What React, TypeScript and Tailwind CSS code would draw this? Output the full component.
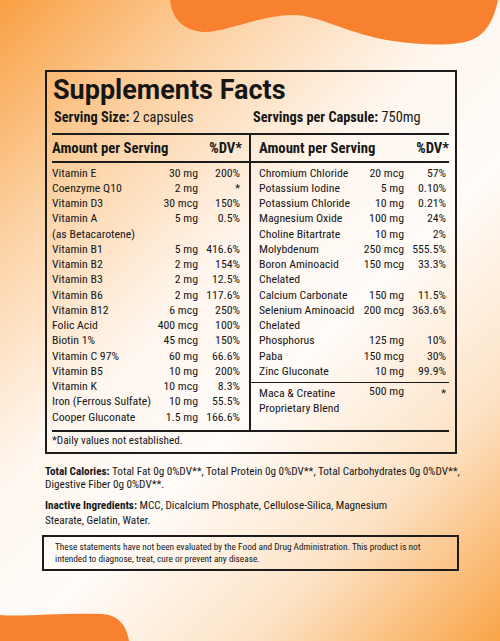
const left: [string, string, string][] = [
  ["Vitamin E", "30 mg", "200%"],
  ["Coenzyme Q10", "2 mg", "*"],
  ["Vitamin D3", "30 mcg", "150%"],
  ["Vitamin A", "5 mg", "0.5%"],
  ["(as Betacarotene)", "", ""],
  ["Vitamin B1", "5 mg", "416.6%"],
  ["Vitamin B2", "2 mg", "154%"],
  ["Vitamin B3", "2 mg", "12.5%"],
  ["Vitamin B6", "2 mg", "117.6%"],
  ["Vitamin B12", "6 mcg", "250%"],
  ["Folic Acid", "400 mcg", "100%"],
  ["Biotin 1%", "45 mcg", "150%"],
  ["Vitamin C 97%", "60 mg", "66.6%"],
  ["Vitamin B5", "10 mg", "200%"],
  ["Vitamin K", "10 mcg", "8.3%"],
  ["Iron (Ferrous Sulfate)", "10 mg", "55.5%"],
  ["Cooper Gluconate", "1.5 mg", "166.6%"],
];

const right: [string, string, string][] = [
  ["Chromium Chloride", "20 mcg", "57%"],
  ["Potassium Iodine", "5 mg", "0.10%"],
  ["Potassium Chloride", "10 mg", "0.21%"],
  ["Magnesium Oxide", "100 mg", "24%"],
  ["Choline Bitartrate", "10 mg", "2%"],
  ["Molybdenum", "250 mcg", "555.5%"],
  ["Boron Aminoacid", "150 mcg", "33.3%"],
  ["Chelated", "", ""],
  ["Calcium Carbonate", "150 mg", "11.5%"],
  ["Selenium Aminoacid", "200 mcg", "363.6%"],
  ["Chelated", "", ""],
  ["Phosphorus", "125 mg", "10%"],
  ["Paba", "150 mcg", "30%"],
  ["Zinc Gluconate", "10 mg", "99.9%"],
];

const Row = ({ name, amount, dv }: { name: string; amount: string; dv: string }) => (
  <div className="flex h-[15.25px] items-center text-[11.8px] leading-[15.25px]">
    <span className="flex-1 whitespace-nowrap">{name}</span>
    <span className="shrink-0 whitespace-nowrap text-right">{amount}</span>
    <span className="w-[42px] shrink-0 text-right">{dv}</span>
  </div>
);

const Header = () => (
  <div className="flex h-[26px] items-center justify-between text-[14.7px] font-bold">
    <span>Amount per Serving</span>
    <span>%DV*</span>
  </div>
);

export default function App() {
  return (
    <div className="relative h-[641px] w-[500px] overflow-hidden bg-[linear-gradient(135deg,#f9a043_0%,#fcd3a6_22%,#fff6ee_42%,#fffcf9_58%,#fde3c6_78%,#f9a447_100%)] font-['Roboto_Condensed',Roboto,sans-serif] font-stretch-condensed text-[#161616]">
      <svg className="absolute left-0 top-0" width="500" height="60" viewBox="0 0 500 60">
        <path
          d="M170,0 C172,18 182,30 203,32 C225,33 260,15 293,15 C320,15 350,35 393,41 C420,45 445,46 465,42 C485,38 494,20 498,0 Z"
          fill="#f7812e"
        />
      </svg>
      <svg className="absolute bottom-0 left-0" width="140" height="30" viewBox="0 611 140 30">
        <path d="M0,615 C20,617 60,613 100,614 C115,614 126,622 129,641 L0,641 Z" fill="#f7812e" />
      </svg>

      <div className="relative ml-[45px] mt-[70px] w-[412px] border-2 border-[#1c1c1c] pl-[5px] pr-[6px] pt-[3px]">
        <h1 className="pl-[1px] font-['Roboto',sans-serif] text-[27px] font-bold leading-[30px] font-stretch-normal">
          Supplements Facts
        </h1>
        <div className="mt-[2px] flex h-[20px] items-center text-[14.3px] leading-[20px]">
          <div className="w-[201px] pl-[2px]">
            <span className="font-bold">Serving Size:</span> 2 capsules
          </div>
          <div>
            <span className="font-bold">Servings per Capsule:</span> 750mg
          </div>
        </div>
        <div className="mt-[6px] h-[2px] bg-[#1c1c1c]" />

        <div className="grid grid-cols-[199px_1fr]">
          <div className="border-r-2 border-[#1c1c1c]">
            <div className="pr-[7px]">
              <Header />
            </div>
            <div className="h-[1.5px] bg-[#1c1c1c]" />
            <div className="pb-[5px] pr-[9px] pt-[3px]">
              {left.map(([n, a, d], i) => (
                <Row key={i} name={n} amount={a} dv={d} />
              ))}
            </div>
          </div>
          <div>
            <div className="pl-[8px]">
              <Header />
            </div>
            <div className="h-[1.5px] bg-[#1c1c1c]" />
            <div className="pl-[8px] pr-[3px] pt-[3px]">
              {right.map(([n, a, d], i) => (
                <Row key={i} name={n} amount={a} dv={d} />
              ))}
            </div>
            <div className="mt-[3px] h-[1px] bg-[#1c1c1c]" />
            <div className="flex pl-[8px] pr-[3px] pt-[3px] text-[11.8px] leading-[15.25px]">
              <div className="flex-1">
                Maca &amp; Creatine
                <br />
                Proprietary Blend
              </div>
              <div className="-mt-[2px] text-right">500 mg</div>
              <div className="w-[42px] text-right">*</div>
            </div>
          </div>
        </div>

        <div className="h-[2px] bg-[#1c1c1c]" />
        <div className="flex h-[20px] items-center text-[11.2px]">*Daily values not established.</div>
      </div>

      <div className="ml-[45px] mt-[11px] text-[11.2px] leading-[13.5px]">
        <span className="font-bold">Total Calories:</span> Total Fat 0g 0%DV**, Total Protein 0g 0%DV**, Total
        Carbohydrates 0g 0%DV**,
        <br />
        Digestive Fiber 0g 0%DV**.
      </div>
      <div className="ml-[45px] mt-[6px] text-[11.2px] leading-[15px]">
        <span className="font-bold">Inactive Ingredients:</span> MCC, Dicalcium Phosphate, Cellulose-Silica, Magnesium
        <br />
        Stearate, Gelatin, Water.
      </div>

      <div className="ml-[42px] mt-[7px] w-[417px] border-2 border-[#1c1c1c] pb-[4px] pl-[11px] pt-[4px] text-[9.3px] leading-[12px]">
        These statements have not been evaluated by the Food and Drug Administration. This product is not
        <br />
        intended to diagnose, treat, cure or prevent any disease.
      </div>
    </div>
  );
}
